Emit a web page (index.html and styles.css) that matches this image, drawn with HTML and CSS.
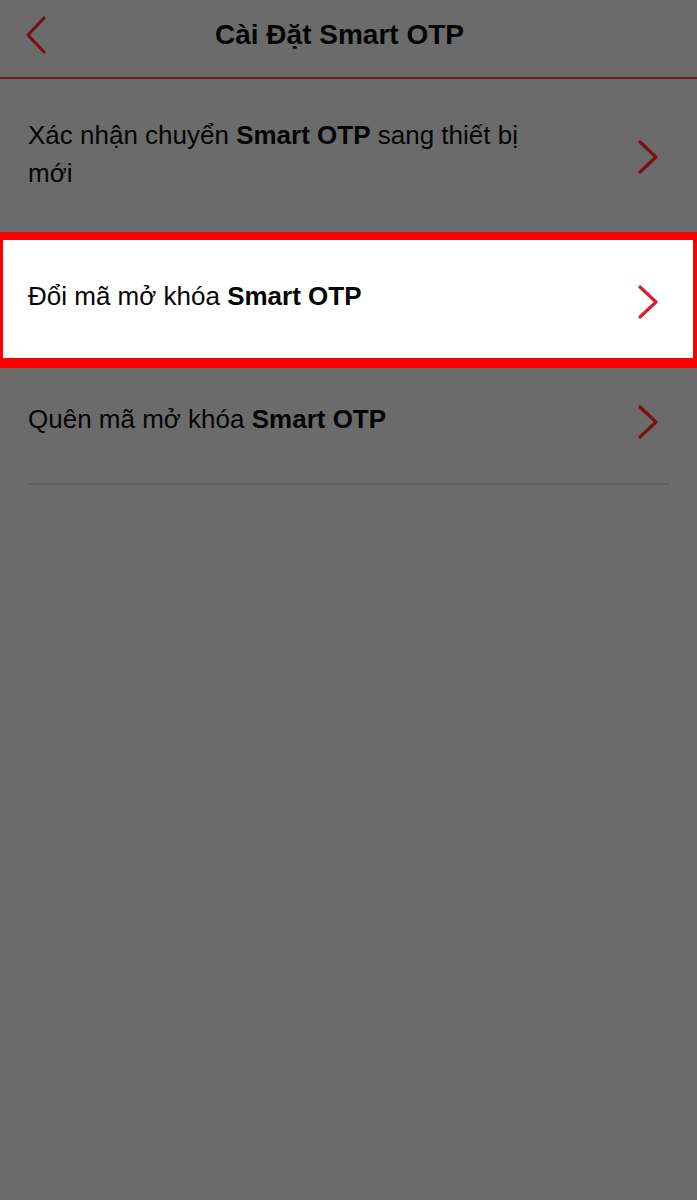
FILE: index.html
```html
<!DOCTYPE html>
<html lang="vi">
<head>
<meta charset="utf-8">
<title>Cài Đặt Smart OTP</title>
<link rel="stylesheet" href="styles.css">
</head>
<body>
<div class="screen">
  <header class="topbar">
    <button class="back" aria-label="Quay lại">
      <svg width="22" height="38" viewBox="0 0 22 38"><polyline points="19,2 3,19 19,36" fill="none" stroke="currentColor" stroke-width="3.2" stroke-linecap="round" stroke-linejoin="round"/></svg>
    </button>
    <h1 class="title">Cài Đặt Smart OTP</h1>
  </header>

  <ul class="menu">
    <li class="item item-first">
      <span class="label wrap">Xác nhận chuyển <b>Smart OTP</b> sang thiết bị mới</span>
      <svg class="chev" width="24" height="34" viewBox="0 0 24 34"><polyline points="3,2 19,17 3,32" fill="none" stroke="currentColor" stroke-width="3.2" stroke-linecap="round" stroke-linejoin="round"/></svg>
    </li>
    <li class="item item-active">
      <span class="label">Đổi mã mở khóa <b>Smart OTP</b></span>
      <svg class="chev" width="24" height="34" viewBox="0 0 24 34"><polyline points="3,2 19,17 3,32" fill="none" stroke="currentColor" stroke-width="3.2" stroke-linecap="round" stroke-linejoin="round"/></svg>
    </li>
    <li class="item item-last">
      <span class="label">Quên mã mở khóa <b>Smart OTP</b></span>
      <svg class="chev" width="24" height="34" viewBox="0 0 24 34"><polyline points="3,2 19,17 3,32" fill="none" stroke="currentColor" stroke-width="3.2" stroke-linecap="round" stroke-linejoin="round"/></svg>
    </li>
  </ul>
  <div class="divider"></div>
</div>
</body>
</html>
```

FILE: styles.css
```css
html, body {
  margin: 0;
  padding: 0;
}

body {
  background: #6b6b6b;
  font-family: "Liberation Sans", Arial, Helvetica, sans-serif;
  color: #050505;
}

.screen {
  width: 697px;
  min-height: 1200px;
  background: #6b6b6b;
}

/* top navigation bar */
.topbar {
  position: relative;
  height: 70px;
  padding-bottom: 7px;
  border-bottom: 2px solid #7a1524;
  display: flex;
  align-items: center;
  justify-content: center;
}

.back {
  position: absolute;
  left: 25px;
  top: 16px;
  padding: 0;
  border: 0;
  background: none;
  color: #7a1016;
  display: flex;
}

.title {
  margin: 0 18px 0 0;
  font-size: 28px;
  font-weight: bold;
  color: #050505;
}

/* settings list */
.menu {
  list-style: none;
  margin: 0;
  padding: 0;
}

.item {
  display: flex;
  align-items: center;
  justify-content: space-between;
  padding: 0 36px 0 28px;
  font-size: 26px;
  line-height: 38px;
}

.label b {
  font-weight: bold;
}

.wrap {
  width: 515px;
}

.chev {
  flex: none;
  color: #7a1016;
  margin-top: 6px;
}

.item-first {
  height: 149px;
  padding-bottom: 4px;
}

.item-active {
  height: 112px;
  padding-bottom: 6px;
  background: #ffffff;
  border-style: solid;
  border-color: #ff0000;
  border-width: 8px 4px 10px 3px;
  padding-left: 25px;
  padding-right: 32px;
}

.item-active .chev {
  color: #d8222b;
  margin-top: 12px;
}

.item-last {
  height: 101px;
  padding-bottom: 14px;
}

.divider {
  height: 2px;
  margin: 0 28px;
  background: #5f5f5f;
}
```
